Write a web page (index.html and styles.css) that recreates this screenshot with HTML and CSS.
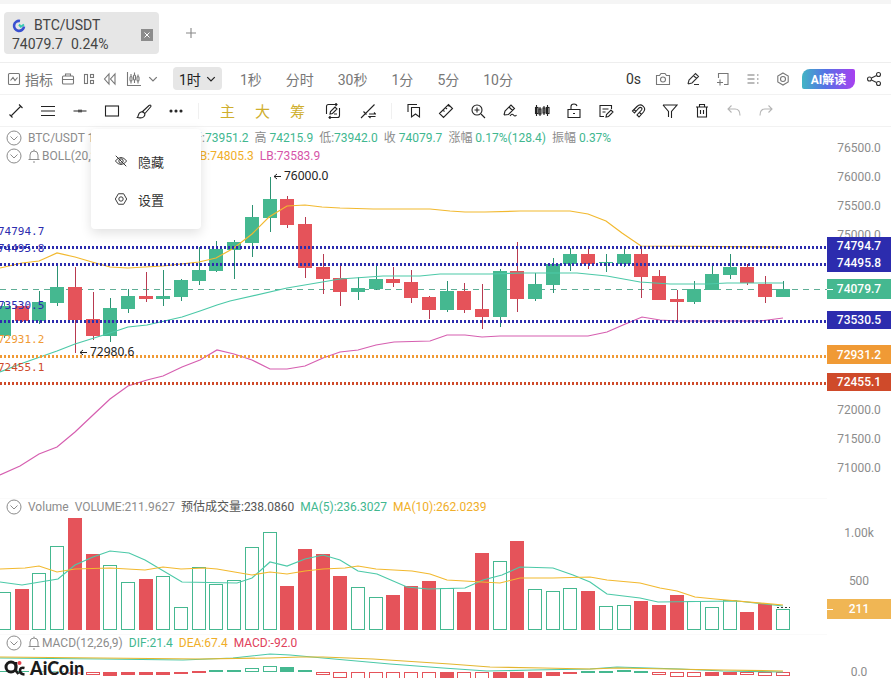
FILE: index.html
```
<!DOCTYPE html>
<html lang="zh-CN">
<head>
    <meta charset="UTF-8">
    <meta name="viewport" content="width=device-width, initial-scale=1.0">
    <title>BTC/USDT 74079.7</title>
    <link rel="stylesheet" href="styles.css">
</head>
<body>

    <header class="tabs">
        <div class="tab">
            <div class="tab-info">
                <div class="tab-name">
                    <svg class="coin" viewBox="0 0 14 14"><path d="M8 2A5 5 0 1 0 12 7.500" fill="none" stroke="#3a50d0" stroke-width="2.600"/><path d="M7 5.500l1.800 2.200L12 5.500" fill="none" stroke="#35c9b0" stroke-width="2"/></svg>
                    BTC/USDT
                </div>
                <div class="tab-price"><span>74079.7</span><span>0.24%</span></div>
            </div>
            <button class="tab-close" aria-label="关闭"><svg viewBox="0 0 12 12"><path d="M3.500 3.500l5 5M8.500 3.500l-5 5"/></svg></button>
        </div>
        <button class="tab-add" aria-label="新建"><svg class="icon" viewBox="0 0 16 16"><path d="M8 3v10M3 8h10"/></svg></button>
    </header>

    <nav class="toolbar periods">
        <div class="group tools">
            <button class="indicator"><svg class="icon" viewBox="0 0 16 16"><rect x="2.500" y="2.500" width="11" height="11" rx="1"/><path d="M4.500 9.500l2.500-3 2 3 2.500-3"/></svg>指标</button>
            <button aria-label="工具箱"><svg class="icon" viewBox="0 0 16 16"><rect x="2.500" y="5" width="11" height="8" rx="1"/><path d="M5.500 5V3h5v2M2.500 8.500h11"/></svg></button>
            <button aria-label="布局"><svg class="icon" viewBox="0 0 16 16"><rect x="3.500" y="3.500" width="3" height="9"/><rect x="9.500" y="3.500" width="3" height="3"/><rect x="9.500" y="9.500" width="3" height="3"/></svg></button>
            <button aria-label="回放"><svg class="icon" viewBox="0 0 16 16"><path d="M7 3v10L2.500 8zM13 3v10L8.500 8z"/></svg></button>
            <button class="kline" aria-label="K线"><svg class="icon" viewBox="0 0 16 16"><path d="M1.500 1v13.500h13.500M5 3v2.500M5 10v2.500M8.500 1.500V4M8.500 9v3M12 3.500v2M12 10v2.500"/><rect x="4" y="5.500" width="2" height="4.500" rx="1"/><rect x="7.500" y="4" width="2" height="5" rx="1"/><rect x="11" y="5.500" width="2" height="4.500" rx="1"/></svg><svg class="icon small" viewBox="0 0 16 16"><path d="M2 5l6 6 6-6"/></svg></button>
        </div>
        <div class="group times">
            <button class="active">1时<svg class="icon small" viewBox="0 0 16 16"><path d="M2 5l6 6 6-6"/></svg></button>
            <button>1秒</button>
            <button>分时</button>
            <button>30秒</button>
            <button>1分</button>
            <button>5分</button>
            <button>10分</button>
        </div>
        <div class="group actions">
            <span class="seconds">0s</span>
            <button aria-label="截图"><svg class="icon" viewBox="0 0 16 16"><path d="M1.500 4.500h3L6 2.500h4l1.500 2h3v9h-13z"/><circle cx="8" cy="8.500" r="2.500"/></svg></button>
            <button class="dark" aria-label="画笔"><svg class="icon" viewBox="0 0 16 16"><path d="M3 13l1-4 6.500-6.500 3 3L7 12l-4 1M8.500 4.500l3 3M9 13.500h5"/></svg></button>
            <button aria-label="添加"><svg class="icon" viewBox="0 0 16 16"><path d="M3.500 7V2.500h9.500v11H9M2 11.500h6M5 8.500v6"/></svg></button>
            <button aria-label="列表"><svg class="icon" viewBox="0 0 16 16"><path d="M2.500 4h7M2.500 8h7M2.500 12h7M12 4h1.500M12 8h1.500M12 12h1.500"/></svg></button>
            <button aria-label="设置"><svg class="icon" viewBox="0 0 16 16"><path d="M8 2l5.200 3v6L8 14l-5.200-3V5z"/><circle cx="8" cy="8" r="2.500"/></svg></button>
            <button class="ai">AI解读</button>
            <button class="dark" aria-label="分享"><svg class="icon" viewBox="0 0 16 16"><circle cx="3.500" cy="8" r="2"/><circle cx="12.500" cy="3.500" r="2"/><circle cx="12.500" cy="12.500" r="2"/><path d="M5.500 7l5-2.600M5.500 9l5 2.600"/></svg></button>
        </div>
    </nav>

    <nav class="toolbar drawing">
        <div class="group">
            <button aria-label="线段"><svg class="icon" viewBox="0 0 16 16"><path d="M3.500 12.500l9-9M1.500 11.500l3 3M11 1.500l3.500 3.500"/></svg></button>
            <button aria-label="平行线"><svg class="icon" viewBox="0 0 16 16"><path d="M1 3.500h14M1 8h14M1 12.500h14"/></svg></button>
            <button aria-label="水平线"><svg class="icon" viewBox="0 0 16 16"><path d="M1.500 8h13M7 6.500v3M9 6.500v3"/></svg></button>
            <button aria-label="矩形"><svg class="icon" viewBox="0 0 16 16"><rect x="1.500" y="3" width="13" height="10"/></svg></button>
            <button aria-label="画刷"><svg class="icon" viewBox="0 0 16 16"><path d="M1.500 14.500c1-1 .5-5 3.500-5.500s5 2 3 4.500-5 1-6.500 1zM6 9l7-6.500c1.500-1 2.500 0 1.500 1.500L8.500 11"/></svg></button>
            <button aria-label="更多"><svg class="icon dots" viewBox="0 0 16 16"><circle cx="3" cy="8" r="1"/><circle cx="8" cy="8" r="1"/><circle cx="13" cy="8" r="1"/></svg></button>
        </div>
        <span class="divider"></span>
        <div class="group gold">
            <button>主</button>
            <button>大</button>
            <button>筹</button>
            <button class="dark" aria-label="编辑"><svg class="icon" viewBox="0 0 16 16"><path d="M1.500 11V3.500q0-2 2-2H12M10.500 0L12 1.500 10.500 3M14.500 5v7.500q0 2-2 2H4M5.500 13L4 14.500 5.500 16M5 11l.5-2.500L10 4l2 2-4.500 4.500zM9 11h3"/></svg></button>
            <button class="dark" aria-label="切换"><svg class="icon" viewBox="0 0 16 16"><path d="M1 15L14.500 1.500M3.500 8.500l3 3M9 11h6.500L14 9.500M15.500 13.500H9l1.500 1.500"/></svg></button>
        </div>
        <span class="divider"></span>
        <div class="group">
            <button aria-label="收藏"><svg class="icon" viewBox="0 0 16 16"><path d="M5.500 4.500h8v9.500l-4-3-4 3zM2 9V1.500h9"/></svg></button>
            <button aria-label="测量"><svg class="icon" viewBox="0 0 16 16"><path d="M1.500 10.500l9-9 4 4-9 9zM5 7l1.500 1.500M7.500 4.500L9 6M10 2l1.500 1.500"/></svg></button>
            <button aria-label="放大"><svg class="icon" viewBox="0 0 16 16"><circle cx="7" cy="7" r="5"/><path d="M11 11l4 4M4.500 7h5M7 4.500v5"/></svg></button>
            <button aria-label="橡皮"><svg class="icon" viewBox="0 0 16 16"><path d="M2 12l1-4 6-6 3.500 3.500-6 6L2 12M7 4l3.500 3.500M8 13q2-3 3.500-1t3 0"/></svg></button>
            <button aria-label="形态"><svg class="icon" viewBox="0 0 16 16"><path d="M2.500 2v11M6 4v9M10 3v9M13.500 2v11"/><rect x="1.500" y="4.500" width="2.500" height="6"/><rect x="5" y="6" width="2" height="5"/><rect x="9" y="5" width="2" height="5"/><rect x="12.500" y="4.500" width="2.500" height="6"/></svg></button>
            <button aria-label="锁定"><svg class="icon" viewBox="0 0 16 16"><path d="M2 6.500h12v8H2zM5 6.500V3.500q0-2.500 3-2.500 2.500 0 3 2M7 10.500h2"/></svg></button>
            <button aria-label="笔记"><svg class="icon" viewBox="0 0 16 16"><path d="M6 13.500H2v-11h11.500V6M4.500 6h6M4.500 9h3M8 14l.500-2.500L13 7l2 2-4.500 4.500z"/></svg></button>
            <button aria-label="磁铁"><svg class="icon" viewBox="0 0 16 16"><path d="M2.500 8L7 3.500c4-4 10 1 6.500 5.500L9 14l-2-2 4.500-5c1.500-2-1-3.500-2.500-2L4.500 10zM4 6.500l2 2M9.500 9.500l2 2"/></svg></button>
            <button aria-label="筛选"><svg class="icon" viewBox="0 0 16 16"><path d="M1 2h14L9.500 8.500V15M1 2l5.500 6.500V14"/></svg></button>
            <button aria-label="删除"><svg class="icon" viewBox="0 0 16 16"><path d="M2 4h12M3.500 4v10h9V4M5.500 4V1.500h5V4M6.500 7v4M9.500 7v4"/></svg></button>
            <button class="faded" aria-label="撤销"><svg class="icon" viewBox="0 0 16 16"><path d="M5.500 2.500L2 6l3.500 3.500M2 6h7q5 0 5 6.500"/></svg></button>
            <button class="faded" aria-label="重做"><svg class="icon" viewBox="0 0 16 16"><path d="M10.500 2.500L14 6l-3.500 3.500M14 6H7q-5 0-5 6.500"/></svg></button>
        </div>
    </nav>

    <main class="chart">
        <svg class="plot" id="plot"></svg>
        <svg class="axis" id="axis"></svg>

        <div class="legend legend-main">
            <div class="legend-row">
                <svg class="fold" viewBox="0 0 16 16"><circle cx="8" cy="8" r="7"/><path d="M4.500 6.500L8 10l3.500-3.500"/></svg>
                <span class="pair-name">BTC/USDT 1小时</span>
                <span>开:<b class="up">73951.2</b></span>
                <span>高 <b class="up">74215.9</b></span>
                <span>低:<b class="up">73942.0</b></span>
                <span>收 <b class="up">74079.7</b></span>
                <span>涨幅 <b class="up">0.17%(128.4)</b></span>
                <span>振幅 <b class="up">0.37%</b></span>
            </div>
            <div class="legend-row">
                <svg class="fold" viewBox="0 0 16 16"><circle cx="8" cy="8" r="7"/><path d="M4.500 6.500L8 10l3.500-3.500"/></svg>
                <span class="boll-name"><svg class="bell" viewBox="0 0 12 14"><path d="M.5 10.500h11M2 10V6q0-4 4-4t4 4v4M5 13h2M6 2V.5"/></svg>BOLL(20,2)</span>
                <span class="ma">UB:74805.3</span>
                <span class="lb">LB:73583.9</span>
            </div>
        </div>

        <div class="legend legend-volume">
            <div class="legend-row">
                <svg class="fold" viewBox="0 0 16 16"><circle cx="8" cy="8" r="7"/><path d="M4.500 6.500L8 10l3.500-3.500"/></svg>
                <span>Volume</span>
                <span>VOLUME:211.9627</span>
                <span class="estimate">预估成交量:238.0860</span>
                <span class="up">MA(5):236.3027</span>
                <span class="ma">MA(10):262.0239</span>
            </div>
        </div>

        <div class="legend legend-macd">
            <div class="legend-row">
                <svg class="fold" viewBox="0 0 16 16"><circle cx="8" cy="8" r="7"/><path d="M4.500 6.500L8 10l3.500-3.500"/></svg>
                <span><svg class="bell" viewBox="0 0 12 14"><path d="M.5 10.500h11M2 10V6q0-4 4-4t4 4v4M5 13h2M6 2V.5"/></svg>MACD(12,26,9)</span>
                <span class="up">DIF:21.4</span>
                <span class="ma">DEA:67.4</span>
                <span class="down">MACD:-92.0</span>
            </div>
        </div>

        <div class="menu">
            <button><svg class="icon" viewBox="0 0 16 16"><path d="M1.500 8q6.500-8 13 0-6.500 8-13 0zM2 2l12 12"/><circle cx="8" cy="8" r="2.500"/></svg>隐藏</button>
            <button><svg class="icon" viewBox="0 0 16 16"><path d="M5 2h6l3.500 6L11 14H5L1.500 8z"/><circle cx="8" cy="8" r="2.500"/></svg>设置</button>
        </div>

        <div class="brand">
            <svg viewBox="0 0 22 18"><circle cx="7" cy="8" r="5" fill="none" stroke="#1b1b1b" stroke-width="3"/><path d="M12 3v9l2.500 3M20.500 9q-4.500-1-4.500 2.500t4.500 4" fill="none" stroke="#1b1b1b" stroke-width="2.600"/><circle cx="15.500" cy="4" r="2" fill="#e5404a"/></svg>
            AiCoin
        </div>
    </main>

    <script src="chart.js"></script>
</body>
</html>
```
FILE: styles.css
```
* {
    box-sizing: border-box;
}

body {
    margin: 0;
    min-height: 100vh;
    display: flex;
    flex-direction: column;
    border-top: 4px solid #f5f5f5;
    background: #fff;
    color: #444;
    font-family: Roboto, "Noto Sans CJK SC", sans-serif;
    font-size: 14px;
    overflow: hidden;
}

button {
    display: flex;
    align-items: center;
    justify-content: center;
    padding: 0;
    border: none;
    background: none;
    color: inherit;
    font: inherit;
    cursor: pointer;
}

.icon {
    width: 16px;
    height: 16px;
    flex: none;
    fill: none;
    stroke: currentColor;
    stroke-width: 1.1;
}

.icon.small {
    width: 10px;
    height: 10px;
    stroke-width: 2;
}

/* tabs */
.tabs {
    display: flex;
    align-items: center;
    height: 59px;
    padding: 0 4px;
    border-bottom: 1px solid #eee;
}

.tab {
    display: flex;
    align-items: center;
    justify-content: space-between;
    width: 155px;
    height: 42px;
    padding: 4px 6px 0 8px;
    border-radius: 4px;
    background: #e6e6e6;
}

.tab-name,
.tab-price {
    display: flex;
    align-items: center;
    gap: 8px;
    line-height: 19px;
}

.coin {
    width: 14px;
    height: 14px;
}

.tab-close {
    width: 12px;
    height: 12px;
    background: #8c8c8c;
}

.tab-close svg {
    width: 12px;
    height: 12px;
    stroke: #fff;
}

.tab-add {
    width: 32px;
    height: 32px;
    margin-left: 16px;
    color: #888;
}

/* toolbars */
.toolbar {
    display: flex;
    align-items: center;
    height: 32px;
    border-bottom: 1px solid #f2f2f2;
}

.group {
    display: flex;
    align-items: center;
}

.periods {
    color: #777;
    padding: 0 9px 0 6px;
}

.tools {
    gap: 5px;
}

.indicator {
    gap: 3px;
    margin-right: 2px;
}

.kline {
    gap: 6px;
    margin-left: 3px;
}

.times {
    gap: 24px;
    margin-left: 15px;
}

.active {
    gap: 5px;
    height: 23px;
    margin-right: -6px;
    padding: 0 6px;
    border-radius: 4px;
    background: #e6e6e6;
    color: #222;
}

.actions {
    gap: 14px;
    margin-left: auto;
}

.seconds,
.dark {
    color: #333;
}

.ai {
    width: 53px;
    height: 20px;
    margin: 0 -3px;
    border-radius: 8px 2px 8px 2px;
    background: linear-gradient(90deg, #41b4c4, #5571e6 45%, #a840f0);
    color: #fff;
    font-size: 12px;
    font-weight: bold;
}

.drawing {
    color: #222;
}

.drawing button {
    width: 32px;
    height: 31px;
}

.drawing .gold {
    padding-left: 5px;
}

.drawing .gold button {
    width: 35px;
    color: #cfae2c;
    font-size: 15px;
}

.drawing .gold .dark {
    color: #222;
}

.drawing .faded {
    color: #b5b5b5;
}

.icon.dots {
    fill: currentColor;
}

.divider {
    width: 1px;
    height: 16px;
    margin: 0 6px;
    background: #f0f0f0;
}

/* chart */
.chart {
    position: relative;
    display: flex;
    flex: 1;
    min-height: 540px;
}

.plot {
    flex: 1;
    min-width: 0;
}

.axis {
    width: 64px;
    flex: none;
}

.plot text,
.axis text {
    font-size: 12px;
}

.axis text {
    fill: #8c8c8c;
    text-anchor: middle;
}

.axis .tag-text {
    fill: #fff;
    font-weight: 500;
}

.plot .level-text {
    font-family: "DejaVu Sans Mono", monospace;
    font-size: 11px;
}

.plot .mark {
    fill: #222;
    font-family: "Noto Sans", sans-serif;
}

.legend {
    position: absolute;
    left: 6px;
    color: #8c8c8c;
    font-size: 12px;
    line-height: 18px;
    white-space: nowrap;
}

.legend b {
    font-weight: normal;
}

.legend-main {
    top: 2px;
}

.legend-volume {
    top: 371px;
}

.legend-macd {
    top: 507px;
}

.legend-row {
    display: flex;
    align-items: center;
    gap: 6px;
}

.fold {
    width: 16px;
    height: 16px;
    fill: none;
    stroke: #8c8c8c;
}

.bell {
    width: 12px;
    height: 14px;
    margin-right: 2px;
    vertical-align: -3px;
    fill: none;
    stroke: #8c8c8c;
}

.pair-name {
    width: 156px;
}

.boll-name {
    width: 158px;
}

.up {
    color: #41b78f;
}

.down {
    color: #e0405a;
}

.ma {
    color: #f0ae28;
}

.lb {
    color: #d655a8;
}

.estimate {
    color: #555;
}

.menu {
    position: absolute;
    left: 91px;
    top: 2px;
    width: 110px;
    padding: 13px 0 11px;
    border-radius: 4px;
    background: #fff;
    box-shadow: 0 4px 12px rgba(0, 0, 0, 0.12);
}

.menu button {
    gap: 10px;
    width: 100%;
    height: 38px;
    padding-right: 14px;
    color: #333;
    font-size: 13px;
}

.menu .icon {
    width: 14px;
    height: 14px;
}

.brand {
    position: absolute;
    left: 4px;
    top: 531px;
    display: flex;
    align-items: center;
    gap: 4px;
    color: #1b1b1b;
    font-family: Lato, sans-serif;
    font-size: 18px;
    font-weight: 900;
    line-height: 20px;
    text-shadow: 0 0 2px #fff, 0 0 2px #fff;
}

.brand svg {
    width: 22px;
    height: 18px;
}
```
FILE: chart.js
```
const GREEN = '#45b890';
const RED = '#e5535a';
const STEP = 17.7;
const BAR = 14;
const TOP = 127;

// [direction, high, body top, body bottom, low]
const candles = [
    ['u', 302, 306, 336, 338], ['d', 305, 306, 321, 322], ['u', 291, 302, 321, 324],
    ['u', 263, 287, 303, 306], ['d', 267, 287, 320, 353], ['d', 292, 319, 336, 340],
    ['u', 298, 308, 336, 342], ['u', 289, 296, 309, 313], ['d', 272, 296, 299, 302],
    ['u', 270, 296, 299, 306], ['u', 279, 280, 297, 301], ['u', 247, 270, 281, 285],
    ['u', 241, 249, 271, 272], ['u', 240, 242, 250, 279], ['u', 205, 217, 243, 257],
    ['u', 177, 199, 218, 232], ['d', 196, 199, 225, 228], ['d', 217, 224, 268, 278],
    ['d', 254, 267, 279, 294], ['d', 266, 278, 292, 306], ['u', 277, 288, 292, 300],
    ['u', 266, 279, 289, 290], ['d', 267, 279, 283, 287], ['d', 270, 282, 298, 303],
    ['d', 296, 297, 310, 319], ['u', 281, 291, 310, 312], ['d', 283, 291, 310, 313],
    ['d', 284, 309, 317, 329], ['u', 269, 271, 317, 327], ['d', 242, 271, 299, 312],
    ['u', 273, 284, 299, 301], ['u', 258, 264, 285, 293], ['u', 248, 254, 264, 271],
    ['d', 248, 254, 264, 269], ['u', 254, 262, 263, 272], ['u', 248, 254, 264, 267],
    ['d', 247, 254, 277, 298], ['d', 270, 276, 300, 300], ['d', 290, 299, 302, 321],
    ['u', 281, 289, 302, 304], ['u', 265, 274, 290, 290], ['u', 254, 267, 275, 279],
    ['d', 264, 267, 283, 285], ['d', 276, 284, 297, 303], ['u', 281, 289, 297, 297]
];

const volumes = [
    592, 589, 573, 546, 518, 554, 565, 582, 579, 576, 607, 567, 584, 580, 547,
    532, 586, 549, 554, 576, 587, 597, 595, 586, 581, 588, 592, 553, 561, 541,
    589, 591, 588, 591, 606, 605, 601, 605, 595, 601, 607, 600, 612, 604, 609
];

// [top, bottom, color, filled]
const macd = [
    [671, 672, GREEN, 1], [671, 672, GREEN, 1], [671, 672, GREEN, 1], [671, 672, GREEN, 1], [672, 674, RED, 1],
    [672, 675, RED, 0], [672, 676, RED, 1], [672, 675, RED, 1], [672, 675, RED, 1], [672, 675, RED, 1],
    [672, 674, RED, 1], [671, 673, RED, 1], [670, 672, GREEN, 1], [670, 672, GREEN, 1], [668, 672, GREEN, 0],
    [666, 672, GREEN, 0], [667, 672, GREEN, 1], [670, 672, GREEN, 1], [672, 675, RED, 0], [672, 678, RED, 0],
    [672, 681, RED, 0], [672, 682, RED, 0], [672, 682, RED, 0], [672, 682, RED, 0], [672, 682, RED, 0],
    [672, 684, RED, 1], [672, 684, RED, 0], [672, 681, RED, 0], [672, 681, RED, 1], [672, 684, RED, 1],
    [672, 681, RED, 1], [672, 676, RED, 1], [672, 674, RED, 1], [671, 673, GREEN, 1], [671, 673, GREEN, 1],
    [670, 672, GREEN, 1], [671, 673, GREEN, 1], [672, 675, RED, 0], [672, 677, RED, 0], [672, 677, RED, 0],
    [672, 676, RED, 1], [672, 675, RED, 1], [672, 675, RED, 0], [672, 676, RED, 0], [672, 676, RED, 0]
];

const lines = [
    ['#f2b92f', '0,268 22,263 39,261 57,253 75,257 92,262 110,267 128,268 145,267 163,266 181,264 199,262 216,258 234,248 252,234 269,217 287,206 305,205 322,207 340,208 373,209 430,209 450,211 465,212 485,212 520,211 570,211 588,214 606,221 622,233 641,246 783,247'],
    ['#4cc9a8', '0,372 23,363 57,351 75,344 110,333 128,327 147,325 182,317 200,311 217,305 230,301 287,288 340,279 383,276 420,276 440,274 490,274 523,273 577,273 607,276 640,282 670,284 707,284 727,283 783,283'],
    ['#d65fb0', '0,475 20,466 39,454 57,447 75,432 93,415 110,399 128,386 147,380 163,376 182,367 200,360 217,350 234,354 252,360 270,369 287,369 305,366 323,358 340,352 358,350 376,345 394,342 430,341 447,335 465,335 482,337 500,336 588,336 607,332 623,325 642,317 660,320 677,321 760,321 783,318'],
    ['#4cc9a8', '0,582 22,585 58,579 75,565 93,557 110,551 129,553 145,560 182,582 237,583 252,578 270,562 287,566 305,559 323,555 340,560 358,571 377,574 407,587 428,589 465,588 483,580 502,575 520,567 553,568 573,575 590,582 607,594 640,598 658,602 737,601 783,606'],
    ['#f2b92f', '0,569 25,568 39,566 57,572 75,569 110,568 145,570 163,567 181,569 205,568 217,569 252,575 270,572 287,574 305,571 323,569 345,568 358,566 376,569 412,571 430,574 447,580 482,582 500,583 520,578 553,578 590,577 607,580 640,583 660,588 677,591 695,597 715,599 783,605'],
    ['#4cc9a8', '0,658 100,659 183,660 233,658 270,654 290,655 323,658 390,664 443,668 487,671 533,670 590,669 617,667 680,669 723,671 783,672'],
    ['#e3b62f', '0,657 100,658 200,659 270,658 300,657 323,657 373,659 450,664 490,667 543,668 590,669 617,668 723,670 783,671']
];

// [price, line y, color, left label y, tag top, tag height]
const levels = [
    ['74794.7', 247, '#2c2cae', 231, 237, 18],
    ['74495.8', 264, '#2c2cae', 248, 254, 18],
    ['73530.5', 321, '#2c2cae', 305, 311, 18],
    ['72931.2', 356, '#f09a35', 339, 345, 19],
    ['72455.1', 383, '#cf4a2a', 367, 373, 18]
];

const axisLabels = [
    ['76500.0', 148], ['76000.0', 177], ['75500.0', 206], ['75000.0', 235],
    ['72000.0', 410], ['71500.0', 439], ['71000.0', 468],
    ['1.00k', 533], ['500', 581], ['0.0', 672]
];

function el(parent, name, attrs, text) {
    const node = document.createElementNS('http://www.w3.org/2000/svg', name);
    for (const key in attrs) {
        node.setAttribute(key, attrs[key]);
    }
    if (text) {
        node.textContent = text;
    }
    parent.appendChild(node);
    return node;
}

function drawBar(x, top, bottom, color, filled) {
    if (filled) {
        el(plot, 'rect', { x: x, y: top - TOP, width: BAR, height: bottom - top, fill: color });
    } else {
        el(plot, 'rect', { x: x + 0.5, y: top - TOP + 0.5, width: BAR - 1, height: bottom - top - 1, fill: '#fff', stroke: color });
    }
}

const plot = document.getElementById('plot');
const axis = document.getElementById('axis');

// pane separators
[498, 634].forEach(y => {
    el(plot, 'line', { x1: 0, x2: '100%', y1: y - TOP + 0.5, y2: y - TOP + 0.5, stroke: '#fafafa' });
});

// last price
el(plot, 'line', { x1: 0, x2: '100%', y1: 162.5, y2: 162.5, stroke: '#5fae96', 'stroke-dasharray': '6 5' });

candles.forEach((c, i) => {
    const color = c[0] === 'u' ? GREEN : RED;
    const x = Math.round(4 + i * STEP) - BAR / 2;
    el(plot, 'rect', { x: x + 7, y: c[1] - TOP, width: 1, height: c[4] - c[1], fill: c[0] === 'u' ? '#2c9273' : '#b83a50' });
    drawBar(x, c[2], c[3], color, true);
    drawBar(x, volumes[i], 630, color, c[0] === 'd');
    drawBar(x, ...macd[i]);
});

lines.forEach(([color, points]) => {
    const shifted = points.split(' ').map(p => {
        const [x, y] = p.split(',');
        return x + ',' + (y - TOP);
    });
    el(plot, 'polyline', { points: shifted.join(' '), fill: 'none', stroke: color, 'stroke-width': 1.2 });
});

// expected volume of the open bar
el(plot, 'line', { x1: 777, x2: 790, y1: 480.5, y2: 480.5, stroke: '#333', 'stroke-dasharray': '2 2' });

axisLabels.forEach(([text, y]) => {
    el(axis, 'text', { x: 32, y: y - TOP + 4 }, text);
});

function drawTag(text, top, height, color) {
    el(axis, 'rect', { x: 0, y: top - TOP, width: 64, height: height, fill: color });
    el(axis, 'text', { x: 32, y: top - TOP + height / 2 + 4, class: 'tag-text' }, text);
}

levels.forEach(([price, y, color, labelY, tagTop, tagHeight]) => {
    el(plot, 'line', { x1: 0, x2: '100%', y1: y - TOP + 0.5, y2: y - TOP + 0.5, stroke: color, 'stroke-width': 3, 'stroke-dasharray': '2 2' });
    el(plot, 'text', { x: -2, y: labelY - TOP + 4, fill: color, class: 'level-text' }, price);
    drawTag(price, tagTop, tagHeight, color);
});
drawTag('74079.7', 279, 20, GREEN);
drawTag('211', 599, 20, '#f0b654');
el(axis, 'line', { x1: 0, x2: 6, y1: 162.5, y2: 162.5, stroke: '#fff' });
el(axis, 'line', { x1: 0, x2: 6, y1: 482.5, y2: 482.5, stroke: '#fff' });

function drawMark(x, y, text) {
    el(plot, 'path', { d: `M${x + 8} ${y - TOP + 0.5}h-7m3-2.500l-3 2.500 3 2.500`, fill: 'none', stroke: '#222' });
    el(plot, 'text', { x: x + 11, y: y - TOP + 4, class: 'mark' }, text);
}

drawMark(273, 176, '76000.0');
drawMark(79, 352, '72980.6');
```
